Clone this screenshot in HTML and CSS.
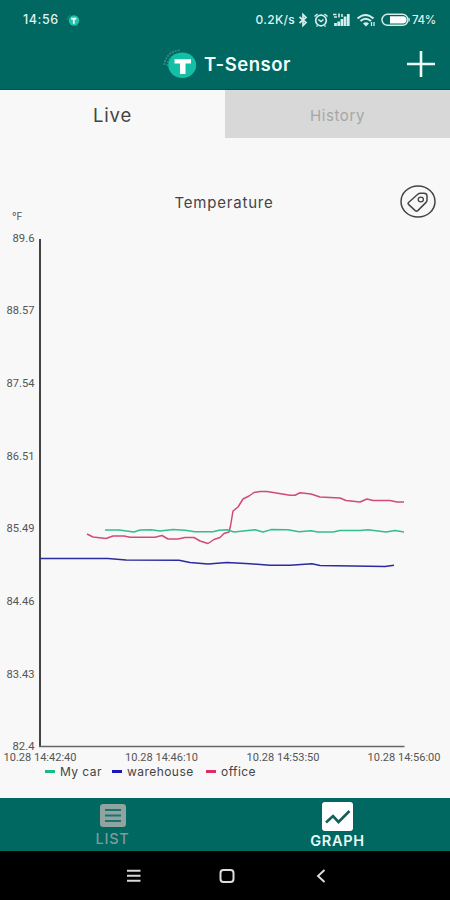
FILE: index.html
```html
<!DOCTYPE html>
<html lang="en">

<head>
    <meta charset="UTF-8">
    <title>T-Sensor</title>
    <link rel="stylesheet" href="styles.css">
</head>

<body>

    <header>
        <div class="statusbar">
            <span class="clock">14:56</span>
            <svg class="mini-logo" width="14" height="14" viewBox="0 0 14 14">
                <circle cx="8" cy="7.5" r="5.2" fill="#1cc4ab" />
                <path d="M1 7a6 6 0 0 1 4-5" fill="none" stroke="#15907f" />
                <path d="M5.2 5.7h5.2M7.8 5.7v5" stroke="#fff" stroke-width="1.8" />
            </svg>
            <span class="speed">0.2K/s</span>
            <svg class="status-icons" width="114" height="20" viewBox="0 0 114 20" fill="none" stroke="#d4eeeb">
                <!-- bluetooth -->
                <path d="M3.5 7l6.500 5.500-3 3v-11l3 3-6.500 5.500" stroke-width="1.700" />
                <!-- alarm -->
                <circle cx="25" cy="10.500" r="5.300" stroke-width="1.700" />
                <path d="M22.300 9.500l2.700 2 2.500-2M18.500 6.500l3-2.500M28.500 4l3 2.500M21.500 15.500l-1 1M28.500 15.500l1 1" stroke-width="1.500" />
                <!-- signal -->
                <path d="M39.500 16v-3M42.700 16v-4.500M45.900 16v-7M49.100 16v-9.500M52.300 16v-12" stroke-width="2.700" />
                <path d="M37 4.500h3.500M38 7h3M43 3.500v4M46 4v3" stroke-width="1.600" />
                <!-- wifi -->
                <path d="M61.500 8.500q8-7 16 0M64.500 11q5-4.500 10.500 0" stroke-width="2" />
                <path d="M67 13.500q3-2.500 6 0l-3 3z" fill="#d4eeeb" stroke="none" />
                <path d="M75.500 12v4M78 12v4" stroke-width="1.300" />
                <!-- battery -->
                <rect x="86" y="4.300" width="26" height="11" rx="5.500" stroke-width="1.500" />
                <path d="M94 6.200h13.500a3.700 3.700 0 0 1 0 7.300h-13.500z" fill="#fff" stroke="none" />
                <path d="M113.200 8v3.500" />
            </svg>
            <span class="battery">74%</span>
        </div>

        <div class="titlebar">
            <svg class="logo" width="34" height="34" viewBox="0 0 34 34">
                <path d="M2.500 18a15 15 0 0 1 16-14.500M5.500 19a12 12 0 0 1 10-12" fill="none" stroke="#2b9387" stroke-width="1.700" stroke-dasharray="2 1" />
                <ellipse cx="20.300" cy="18.300" rx="14" ry="12.800" fill="#13bfa6" />
                <path d="M12.500 12.300h16.500v4.200h-5.500v10.500h-5.500v-10.500h-5.500z" fill="#fff" />
            </svg>
            <h1>T-Sensor</h1>
            <svg class="add" width="28" height="28" viewBox="0 0 28 28">
                <path d="M0 14h28M14 1v26" stroke="#ecfaf8" stroke-width="2.600" />
            </svg>
        </div>
    </header>

    <nav class="tabs">
        <button class="tab active">Live</button>
        <button class="tab">History</button>
    </nav>

    <main>
        <div class="chart-head">
            <span class="unit">°F</span>
            <h2>Temperature</h2>
            <svg class="tag" width="36" height="34" viewBox="0 0 36 34" fill="none" stroke="#444">
                <ellipse cx="18" cy="16.500" rx="17" ry="15.500" stroke-width="1.500" />
                <path d="M8.800 17.200L17.500 9.500q1.400-1.200 3-1.200l3.500 0q2.800 0 3 2.400v4.300q0 1.500-1.200 2.600l-8 8q-1.300 1.100-2.600 0L8.800 19.600q-1.400-1.200 0-2.400z" stroke-width="1.500" />
                <ellipse cx="20.800" cy="14.500" rx="2.600" ry="2.300" stroke-width="1.300" />
            </svg>
        </div>

        <svg class="chart" width="450" height="540" viewBox="0 224 450 540">
            <g class="ylabels">
                <text x="12.500" y="241.500" textLength="22" lengthAdjust="spacingAndGlyphs">89.6</text>
                <text x="6.500" y="314" textLength="28" lengthAdjust="spacingAndGlyphs">88.57</text>
                <text x="6.500" y="387" textLength="28" lengthAdjust="spacingAndGlyphs">87.54</text>
                <text x="6.500" y="459.500" textLength="28" lengthAdjust="spacingAndGlyphs">86.51</text>
                <text x="6.500" y="532" textLength="28" lengthAdjust="spacingAndGlyphs">85.49</text>
                <text x="6.500" y="604.500" textLength="28" lengthAdjust="spacingAndGlyphs">84.46</text>
                <text x="6.500" y="677.500" textLength="28" lengthAdjust="spacingAndGlyphs">83.43</text>
                <text x="12.500" y="750" textLength="22" lengthAdjust="spacingAndGlyphs">82.4</text>
            </g>
            <g class="xlabels">
                <text x="3.500" y="761" textLength="73" lengthAdjust="spacingAndGlyphs">10.28 14:42:40</text>
                <text x="125" y="761" textLength="73" lengthAdjust="spacingAndGlyphs">10.28 14:46:10</text>
                <text x="246.500" y="761" textLength="73" lengthAdjust="spacingAndGlyphs">10.28 14:53:50</text>
                <text x="367.500" y="761" textLength="73" lengthAdjust="spacingAndGlyphs">10.28 14:56:00</text>
            </g>
            <path class="axis-y" d="M40 239V747" />
            <path class="axis-x" d="M39 746.500H404.500" />
            <polyline class="line office" points="87,534 93,537 106,538.500 113,536 124,536 130,537.300 155,537.300 162,535.500 168,539 178,539 185,537.500 194,537.500 200,541 208,543.500 214,539.500 220,537.500 224,533.500 229,532 230.500,526 233,511 238,507 243,499 249,496 254,492.500 260,491.500 267,491.500 290,495.200 295,495.200 300,492.800 311,494 320,497 340,498 346,500.500 360,502 367,499 373,500.500 390,500.500 397,502 404,502" />
            <polyline class="line car" points="105,530 119,530 134,532 140,530 151,529.800 160,531 173,529.500 185,530.200 195,531.800 213,531.800 219,530.200 227,529.800 234,532 255,529.700 263,532 271,529.600 288,529.800 299,531.800 311,530.800 318,532 333,532 340,530.500 360,530.500 368,529.700 386,532 395,530.500 404,532" />
            <polyline class="line warehouse" points="40,558.500 108,558.500 126,560 179,560.200 190,562.500 208,564 227,562.500 250,563.800 270,565.200 290,565.200 312,563.800 320,565.500 385,566.500 394,565.200" />
        </svg>

        <div class="legend">
            <span class="key car"><i></i><b class="w-car">My car</b></span>
            <span class="key warehouse"><i></i><b class="w-warehouse">warehouse</b></span>
            <span class="key office"><i></i><b class="w-office">office</b></span>
        </div>
    </main>

    <footer>
        <button class="menu-item">
            <svg width="26" height="23" viewBox="0 0 26 23">
                <rect width="26" height="23" rx="3" fill="#8fa3a1" />
                <path d="M5 6h16M5 11.500h16M5 17h16" stroke="#21706b" stroke-width="2" />
            </svg>
            <span>LIST</span>
        </button>
        <button class="menu-item chosen">
            <svg width="31" height="29" viewBox="0 0 31 29">
                <rect width="31" height="29" rx="3" fill="#fff" />
                <path d="M4 20.500l7-6.500 5.500 6L27.500 9" fill="none" stroke="#12605a" stroke-width="2.600" />
            </svg>
            <span>GRAPH</span>
        </button>
    </footer>

    <div class="navbar">
        <svg width="14" height="14" viewBox="0 0 14 14">
            <path d="M0 1.700h13.500M0 6.700h13.500M0 11.700h13.500" stroke="#d8d8d8" stroke-width="2" />
        </svg>
        <svg width="16" height="14" viewBox="0 0 16 14">
            <rect x="1.500" y="1" width="13" height="12" rx="3" fill="none" stroke="#ddd" stroke-width="2" />
        </svg>
        <svg width="10" height="14" viewBox="0 0 10 14">
            <path d="M8.500 1L2 7l6.500 6" fill="none" stroke="#ddd" stroke-width="1.900" />
        </svg>
    </div>

</body>

</html>
```

FILE: styles.css
```css
* {
    box-sizing: border-box;
}

body {
    margin: 0;
    width: 450px;
    height: 900px;
    display: flex;
    flex-direction: column;
    overflow: hidden;
    background-color: #f8f8f8;
    font-family: Inter, sans-serif;
}

svg {
    display: block;
    flex: none;
}

button {
    border: none;
    padding: 0;
    font-family: inherit;
}

header {
    height: 90px;
    background-color: #006761;
    border-bottom: 1px solid #07524d;
}

.statusbar {
    display: flex;
    align-items: center;
    height: 38px;
    padding: 1px 12px 0 23px;
    color: #dff3f0;
    font-size: 12px;
    font-weight: 500;
}

.clock {
    width: 36px;
    font-size: 12.5px;
    letter-spacing: .6px;
}

.mini-logo {
    margin-left: 7px;
}

.speed {
    margin-left: auto;
    letter-spacing: .3px;
}

.status-icons {
    margin-left: 1px;
}

.battery {
    width: 25px;
    font-size: 11.5px;
    letter-spacing: -.3px;
    margin-left: 2px;
    margin-right: 1px;
}

.titlebar {
    display: flex;
    align-items: center;
    height: 52px;
    padding: 0 15px 0 162px;
}

h1 {
    margin: 0 0 0 8px;
    color: #f2fffd;
    font-size: 18.5px;
    font-weight: 600;
    letter-spacing: .5px;
    white-space: nowrap;
}

.add {
    margin-left: auto;
}

.tabs {
    display: flex;
    height: 48px;
}

.tab {
    flex: 1;
    background-color: #d8d8d8;
    color: #a6a6a6;
    font-size: 15px;
    letter-spacing: .6px;
    padding-top: 2px;
}

.tab.active {
    background-color: #f8f8f8;
    color: #444;
    font-size: 18.5px;
    letter-spacing: .8px;
}

main {
    height: 660px;
    padding-top: 42px;
}

.chart-head {
    display: grid;
    grid-template-columns: 100px 1fr 100px;
    align-items: center;
    height: 44px;
    padding: 0 14px 0 12px;
}

.unit {
    padding-top: 27px;
    font-size: 10px;
    color: #555;
}

h2 {
    margin: 0;
    color: #444;
    font-size: 15px;
    font-weight: 400;
    letter-spacing: .8px;
    text-align: center;
}

.tag {
    justify-self: end;
}

.chart text {
    font-family: Roboto, sans-serif;
    font-size: 10px;
    fill: #555;
}

.axis-y {
    stroke: #444;
    stroke-width: 2;
}

.axis-x {
    stroke: #666;
    stroke-width: 1.3;
}

.line {
    fill: none;
    stroke-width: 1.5;
    stroke-linejoin: round;
}

.line.car {
    stroke: #32bd8f;
}

.line.warehouse {
    stroke: #2b2b9e;
}

.line.office {
    stroke: #d14b73;
}

.legend {
    display: flex;
    height: 14px;
    padding-left: 45px;
}

.key {
    display: flex;
    align-items: center;
}

.key i {
    width: 10px;
    height: 3px;
    margin-right: 5px;
}

.key b {
    color: #444;
    font-size: 12px;
    font-weight: 400;
    letter-spacing: .45px;
    white-space: nowrap;
}

.key.car i {
    background-color: #17bb86;
}

.key.warehouse i {
    background-color: #1717bb;
}

.key.office i {
    background-color: #df2c66;
}

.w-car {
    width: 52px;
}

.w-warehouse {
    width: 79px;
}

footer {
    display: flex;
    height: 53px;
    background-color: #006761;
}

.menu-item {
    flex: 1;
    display: flex;
    flex-direction: column;
    align-items: center;
    background: none;
    color: #7d9b98;
    font-size: 14.5px;
    font-weight: 500;
    line-height: 17px;
    padding-top: 6px;
}

.menu-item span {
    margin-top: 3px;
    letter-spacing: .7px;
}

.menu-item.chosen {
    color: #e8faf7;
    font-weight: 600;
    font-size: 14.5px;
    padding-top: 4px;
}

.menu-item.chosen span {
    margin-top: 1px;
}

.navbar {
    display: flex;
    align-items: center;
    height: 49px;
    padding-left: 127px;
    background-color: #000;
}

.navbar svg + svg {
    margin-left: 78px;
}

.navbar svg:last-child {
    margin-left: 81px;
}
```
